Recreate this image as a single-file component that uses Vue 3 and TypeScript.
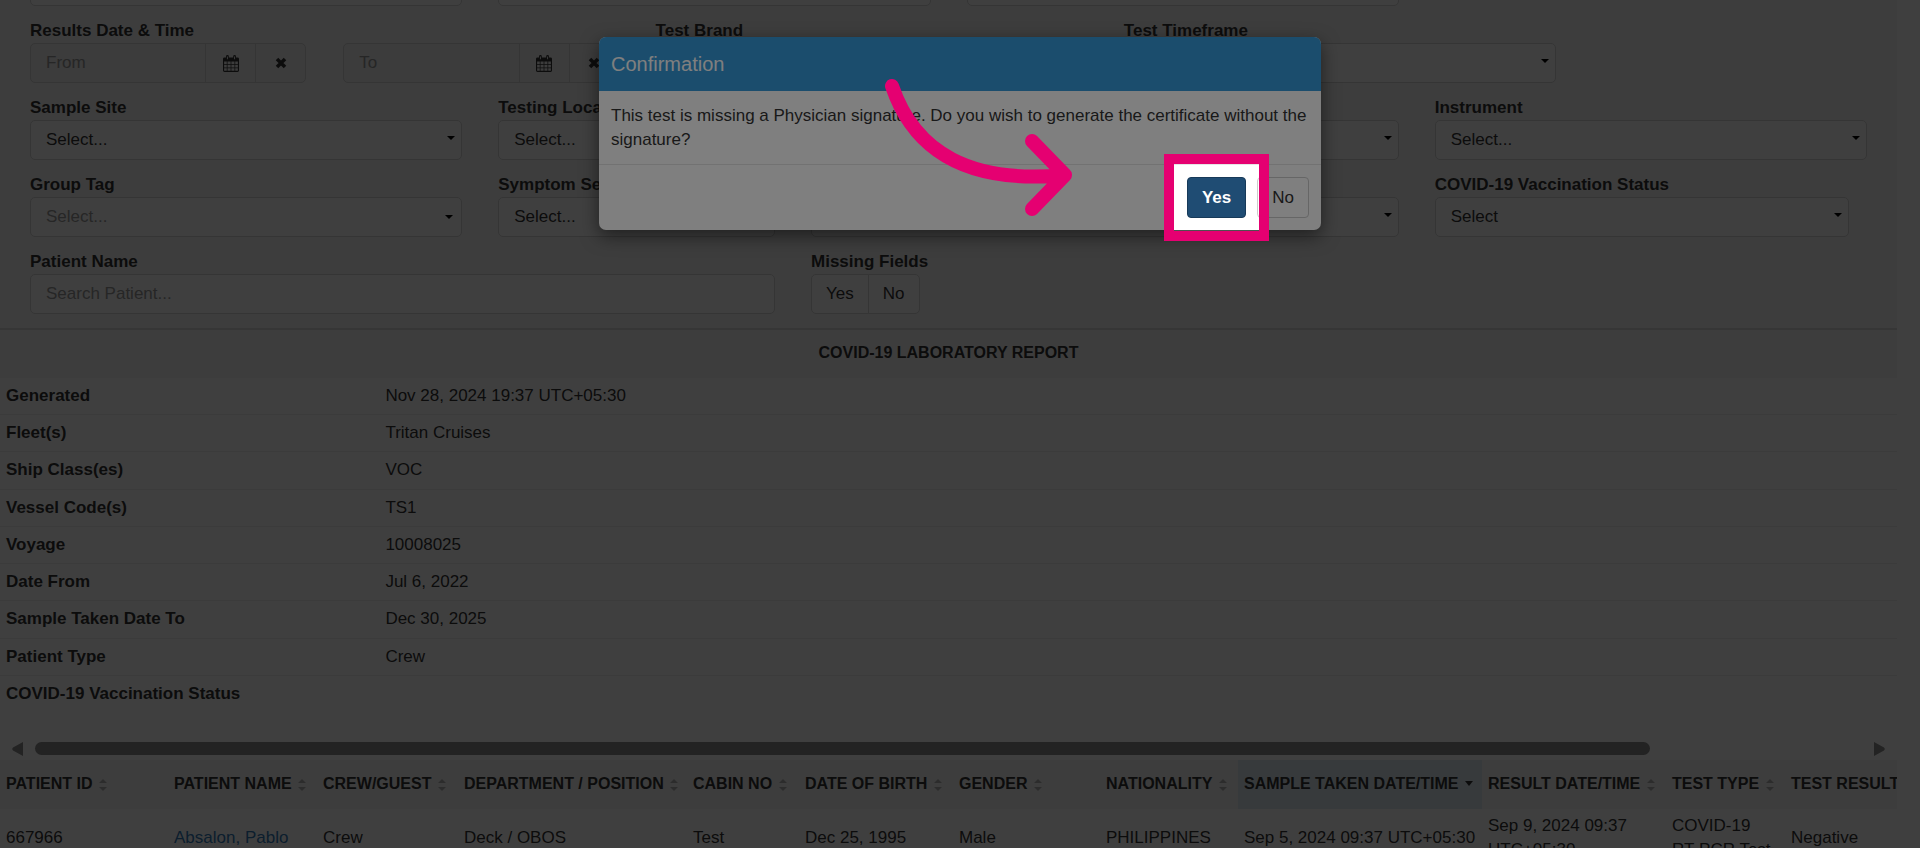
<script setup lang="ts">
interface Column {
  title: string
  width: number
  value: string
  sorted?: boolean
  link?: boolean
}

const info: [string, string][] = [
  ['Generated', 'Nov 28, 2024 19:37 UTC+05:30'],
  ['Fleet(s)', 'Tritan Cruises'],
  ['Ship Class(es)', 'VOC'],
  ['Vessel Code(s)', 'TS1'],
  ['Voyage', '10008025'],
  ['Date From', 'Jul 6, 2022'],
  ['Sample Taken Date To', 'Dec 30, 2025'],
  ['Patient Type', 'Crew'],
  ['COVID-19 Vaccination Status', ''],
]

const columns: Column[] = [
  { title: 'PATIENT ID', width: 168, value: '667966' },
  { title: 'PATIENT NAME', width: 149, value: 'Absalon, Pablo', link: true },
  { title: 'CREW/GUEST', width: 141, value: 'Crew' },
  { title: 'DEPARTMENT / POSITION', width: 229, value: 'Deck / OBOS' },
  { title: 'CABIN NO', width: 112, value: 'Test' },
  { title: 'DATE OF BIRTH', width: 154, value: 'Dec 25, 1995' },
  { title: 'GENDER', width: 147, value: 'Male' },
  { title: 'NATIONALITY', width: 138, value: 'PHILIPPINES' },
  { title: 'SAMPLE TAKEN DATE/TIME', width: 244, value: 'Sep 5, 2024 09:37 UTC+05:30', sorted: true },
  { title: 'RESULT DATE/TIME', width: 184, value: 'Sep 9, 2024 09:37 UTC+05:30' },
  { title: 'TEST TYPE', width: 119, value: 'COVID-19 RT-PCR Test' },
  { title: 'TEST RESULT', width: 375, value: 'Negative' },
]
</script>

<template>
  <div class="screen">
    <main class="page">
      <form class="filters" @submit.prevent>
        <div class="row">
          <div v-for="n in 3" :key="n" class="field quarter">
            <label :for="'filter-' + n">&nbsp;</label>
            <input :id="'filter-' + n" class="control" type="text" />
          </div>
        </div>

        <div class="row">
          <div class="field third">
            <label for="date-from">Results Date &amp; Time</label>
            <div class="dates">
              <div v-for="d in ['From', 'To']" :key="d" class="group">
                <input :id="'date-' + d.toLowerCase()" class="control" type="text" :placeholder="d" :aria-label="d" />
                <button type="button" class="addon" aria-label="Open calendar">
                  <svg width="16" height="17" viewBox="0 0 17 18">
                    <path fill="currentColor" fill-rule="evenodd" d="M1.500 2.500H3.200V1.500Q3.200 0 4.700 0T6.200 1.500V2.500H10.800V1.500Q10.800 0 12.300 0T13.800 1.500V2.500H15.500Q17 2.500 17 4V16.500Q17 18 15.500 18H1.500Q0 18 0 16.500V4Q0 2.500 1.500 2.500ZM4.200 1.500V4.500H5.200V1.500ZM11.800 1.500V4.500H12.800V1.500ZM1.200 7V9.600H4V7ZM4.800 7V9.600H8.100V7ZM8.900 7V9.600H12.200V7ZM13 7V9.600H15.800V7ZM1.200 10.400V13.300H4V10.400ZM4.800 10.400V13.300H8.100V10.400ZM8.900 10.400V13.300H12.200V10.400ZM13 10.400V13.300H15.800V10.400ZM1.200 14.100V16.800H4V14.100ZM4.800 14.100V16.800H8.100V14.100ZM8.900 14.100V16.800H12.200V14.100ZM13 14.100V16.800H15.800V14.100Z" />
                  </svg>
                </button>
                <button type="button" class="addon" aria-label="Clear date">
                  <svg width="12" height="12" viewBox="0 0 12 12">
                    <path d="M2 2L10 10M10 2L2 10" stroke="currentColor" stroke-width="3.600" />
                  </svg>
                </button>
              </div>
            </div>
          </div>
          <div class="field quarter">
            <label for="brand">Test Brand</label>
            <div class="select">
              <select id="brand" class="control"><option></option></select>
              <svg class="caret" viewBox="0 0 8 4"><path d="M0 0H8L4 4Z" /></svg>
            </div>
          </div>
          <div class="field quarter">
            <label for="timeframe">Test Timeframe</label>
            <div class="select">
              <select id="timeframe" class="control"><option></option></select>
              <svg class="caret" viewBox="0 0 8 4"><path d="M0 0H8L4 4Z" /></svg>
            </div>
          </div>
        </div>

        <div class="row">
          <div v-for="(name, i) in ['Sample Site', 'Testing Location', 'Test Method', 'Instrument']" :key="name" class="field quarter">
            <label :for="'place-' + i">{{ name }}</label>
            <div class="select">
              <select :id="'place-' + i" class="control"><option>Select...</option></select>
              <svg class="caret" viewBox="0 0 8 4"><path d="M0 0H8L4 4Z" /></svg>
            </div>
          </div>
        </div>

        <div class="row">
          <div class="field quarter">
            <label for="tag">Group Tag</label>
            <div class="select">
              <select id="tag" class="control muted"><option>Select...</option></select>
              <svg class="caret low" viewBox="0 0 8 4"><path d="M0 0H8L4 4Z" /></svg>
            </div>
          </div>
          <div class="field sixth">
            <label for="symptom">Symptom Search</label>
            <select id="symptom" class="control"><option>Select...</option></select>
          </div>
          <div class="field wide">
            <label for="symptoms">Symptoms</label>
            <div class="select">
              <select id="symptoms" class="control"><option></option></select>
              <svg class="caret" viewBox="0 0 8 4"><path d="M0 0H8L4 4Z" /></svg>
            </div>
          </div>
          <div class="field quarter vaccination">
            <label for="vaccination">COVID-19 Vaccination Status</label>
            <div class="select">
              <select id="vaccination" class="control"><option>Select</option></select>
              <svg class="caret" viewBox="0 0 8 4"><path d="M0 0H8L4 4Z" /></svg>
            </div>
          </div>
        </div>

        <div class="row">
          <div class="field patient">
            <label for="patient">Patient Name</label>
            <input id="patient" class="control" type="text" placeholder="Search Patient..." />
          </div>
          <div class="field">
            <span id="missing" class="label">Missing Fields</span>
            <div class="toggle" role="group" aria-labelledby="missing">
              <button type="button">Yes</button>
              <button type="button">No</button>
            </div>
          </div>
        </div>
      </form>

      <h2 class="report-title">COVID-19 LABORATORY REPORT</h2>

      <table class="info">
        <tbody>
          <tr v-for="[key, value] in info" :key="key">
            <th scope="row">{{ key }}</th>
            <td>{{ value }}</td>
          </tr>
        </tbody>
      </table>

      <div class="scrollbar" aria-hidden="true">
        <svg width="11" height="14" viewBox="0 0 11 14"><path d="M11 0V14L1 8.500Q-0.500 7 1 5.500Z" /></svg>
        <div class="track"><div class="thumb"></div></div>
        <svg width="11" height="14" viewBox="0 0 11 14"><path d="M0 0V14L10 8.500Q11.500 7 10 5.500Z" /></svg>
      </div>

      <div class="results">
        <table>
          <colgroup>
            <col v-for="c in columns" :key="c.title" :style="{ width: c.width + 'px' }" />
          </colgroup>
          <thead>
            <tr>
              <th v-for="c in columns" :key="c.title" scope="col" :class="{ sorted: c.sorted }">
                {{ c.title }}
                <svg v-if="c.sorted" class="sort" viewBox="0 0 8 12"><path d="M0 2H8L4 7Z" /></svg>
                <svg v-else class="sort" viewBox="0 0 8 12"><path d="M0 4H8L4 0ZM0 8H8L4 12Z" /></svg>
              </th>
            </tr>
          </thead>
          <tbody>
            <tr>
              <td v-for="c in columns" :key="c.title">
                <a v-if="c.link" href="#">{{ c.value }}</a>
                <template v-else>{{ c.value }}</template>
              </td>
            </tr>
          </tbody>
        </table>
      </div>
    </main>

    <div class="backdrop">
      <div class="dialog" role="dialog" aria-labelledby="dialog-title">
        <h3 id="dialog-title">Confirmation</h3>
        <p>This test is missing a Physician signature. Do you wish to generate the certificate without the signature?</p>
        <footer>
          <div class="target">
            <button type="button" class="primary">Yes</button>
            <div class="spotlight"></div>
            <svg class="arrow" width="200" height="144" viewBox="0 0 200 144">
              <path d="M12 12C35 80 92 110 185 101M152 67L185 101L152 135" />
            </svg>
          </div>
          <button type="button">No</button>
        </footer>
      </div>
    </div>
  </div>
</template>

<style>
body {
  margin: 0;
}
</style>

<style scoped>
.screen {
  position: relative;
  height: 100vh;
  overflow: hidden;
  background: #fff;
  color: #333;
  font-family: "Liberation Sans", Arial, sans-serif;
  font-size: 17px;
  line-height: 24px;
}

.screen * {
  box-sizing: border-box;
}

button,
input,
select {
  font: inherit;
  color: inherit;
}

/* The page is scrolled, so its first filter row is mostly out of view. */
.page {
  margin: -58px 23px 0 0;
}

.filters {
  display: flex;
  flex-direction: column;
  gap: 13px;
  padding: 0 12px 14px;
  background: #f5f5f5;
}

.row {
  display: flex;
}

.field {
  padding: 0 18px;
}

.quarter {
  width: 25%;
}

.third {
  width: 33.400%;
}

.sixth {
  width: 16.700%;
}

.wide {
  width: 33.300%;
}

.patient {
  width: 41.700%;
}

.vaccination {
  padding-right: 36px;
}

label,
.label {
  display: block;
  line-height: 24px;
  font-weight: bold;
}

.control {
  display: block;
  width: 100%;
  height: 40px;
  margin: 0;
  padding: 0 15px;
  border: 1px solid #d4d4d4;
  border-radius: 5px;
  background: #fff;
  appearance: none;
  outline: 0;
}

.control::placeholder {
  color: #999;
  opacity: 1;
}

.muted {
  color: #999;
}

.dates {
  display: flex;
  gap: 37px;
}

.group {
  display: flex;
  flex: 1;
}

.group .control {
  flex: 1;
  min-width: 0;
  background: #f0f0f0;
  border-radius: 5px 0 0 5px;
}

.addon {
  display: flex;
  align-items: center;
  justify-content: center;
  width: 51px;
  height: 40px;
  margin-left: -1px;
  padding: 0;
  border: 1px solid #d4d4d4;
  background: #f3f3f3;
}

.addon:last-child {
  border-radius: 0 5px 5px 0;
}

.select {
  display: grid;
  align-items: center;
}

.select > * {
  grid-area: 1 / 1;
}

.caret {
  width: 8px;
  height: 4px;
  margin: 0 7px 4px 0;
  justify-self: end;
  pointer-events: none;
}

.caret.low {
  margin: 0 9px 0 0;
}

.toggle {
  display: flex;
}

.toggle button {
  height: 40px;
  padding: 0 14px;
  border: 1px solid #d4d4d4;
  border-radius: 5px 0 0 5px;
  background: #fff;
}

.toggle button + button {
  margin-left: -1px;
  border-radius: 0 5px 5px 0;
}

.report-title {
  margin: 0;
  padding: 11px 0 13px;
  border-top: 2px solid #d8d8d8;
  background: #f5f5f5;
  font-size: 16px;
  line-height: 24px;
  text-align: center;
}

.info {
  width: 100%;
  height: 334px;
  border-collapse: collapse;
}

.info th,
.info td {
  padding: 0 6px;
  border-bottom: 1px solid #ececec;
  text-align: left;
}

.info th {
  width: 20%;
}

.info tr:last-child > * {
  border-bottom: 0;
}

.scrollbar {
  display: flex;
  gap: 12px;
  padding: 30px 12px 4px;
  fill: #8c8c8c;
}

.track {
  flex: 1;
}

.thumb {
  width: 88.400%;
  height: 13px;
  border-radius: 7px;
  background: #8c8c8c;
}

.results {
  overflow: hidden;
}

.results table {
  width: 2160px;
  table-layout: fixed;
  border-collapse: collapse;
}

.results th,
.results td {
  padding: 5px 6px;
  text-align: left;
}

.results th {
  height: 49px;
  padding: 0 6px 2px;
  background: #f5f5f5;
  font-size: 16px;
  white-space: nowrap;
}

.results .sorted {
  background: #dfebf3;
}

.sort {
  width: 8px;
  height: 12px;
  margin-left: 2px;
  vertical-align: -2px;
  fill: #b3b3b3;
}

.sorted .sort {
  fill: #333;
}

a {
  color: #337ab7;
  text-decoration: none;
}

.backdrop {
  position: absolute;
  inset: 0;
  padding-top: 37px;
  background: rgba(0, 0, 0, 0.5);
}

.dialog {
  width: 722px;
  margin: 0 auto;
  border-radius: 7px;
  background: #fff;
  box-shadow: 0 6px 18px rgba(0, 0, 0, 0.5);
}

.dialog h3 {
  margin: 0;
  padding: 15px 12px;
  border-radius: 7px 7px 0 0;
  background: #369ada;
  color: #fff;
  font-size: 20px;
  font-weight: normal;
  line-height: 24px;
}

.dialog p {
  margin: 0;
  padding: 13px 12px 12px;
}

footer {
  display: flex;
  justify-content: flex-end;
  gap: 11px;
  padding: 12px;
  border-top: 1px solid #e5e5e5;
}

footer button {
  height: 41px;
  padding: 0 14px;
  border: 1px solid #ccc;
  border-radius: 4px;
  background: #fff;
}

.target {
  position: relative;
}

.primary {
  border-color: #173a59;
  background: #1f4c73;
  color: #fff;
  font-weight: bold;
}

/* The cut-out dims everything around the highlighted button. */
.spotlight {
  position: absolute;
  inset: -23px;
  border: 10px solid #e50071;
  box-shadow: 0 0 0 2000px rgba(0, 0, 0, 0.5);
  pointer-events: none;
}

.arrow {
  position: absolute;
  top: -103px;
  right: 166px;
  fill: none;
  stroke: #e50071;
  stroke-width: 14;
  stroke-linecap: round;
  stroke-linejoin: round;
  pointer-events: none;
}
</style>
